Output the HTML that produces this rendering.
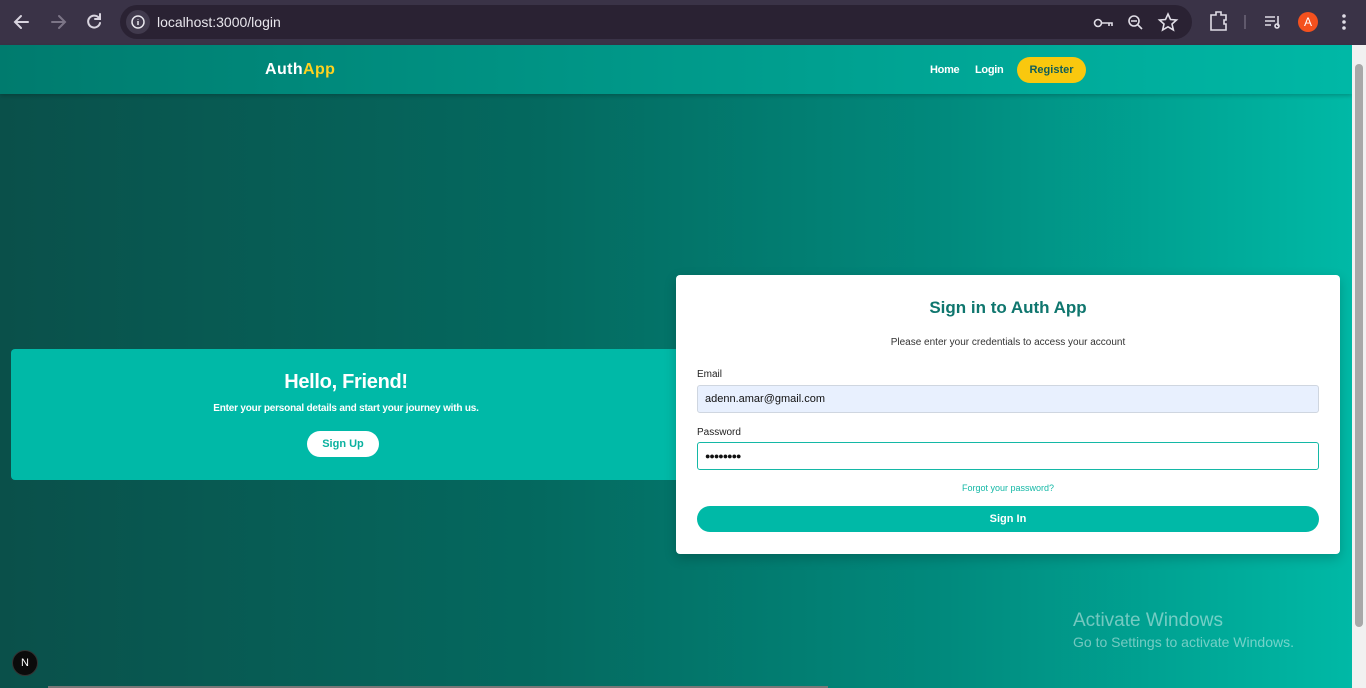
<!DOCTYPE html>
<html><head><style>
*{margin:0;padding:0;box-sizing:border-box}
body{width:1366px;height:688px;overflow:hidden;font-family:"Liberation Sans",sans-serif;background:#000;position:relative}
.chrome{position:absolute;left:0;top:0;width:1366px;height:45px;background:#3a3347}
.url{position:absolute;left:120px;top:5px;width:1072px;height:34px;border-radius:17px;background:#2a2233}
.url .txt{position:absolute;left:37px;top:9px;color:#e8e6ec;font-size:14px}
.info{position:absolute;left:6px;top:5px;width:24px;height:24px;border-radius:12px;background:#413a4d}
.page{position:absolute;left:0;top:45px;width:1352px;height:643px;background:linear-gradient(90deg,#0a504a 0%,#04695f 40%,#018a7d 70%,#00b9a6 100%)}
.head{position:absolute;left:0;top:0;width:1352px;height:49px;background:linear-gradient(90deg,#007b6e,#00b8a6);box-shadow:0 2px 4px rgba(0,0,0,.2)}
.logo{position:absolute;left:265px;top:16px;font-weight:bold;font-size:16px;color:#fff;letter-spacing:.4px}
.logo span{color:#ffd21f}
.nav{position:absolute;top:19px;font-size:11px;font-weight:bold;color:#fff;letter-spacing:-.3px}
.reg{position:absolute;left:1017px;top:12px;width:69px;height:26px;border-radius:13px;background:#f9c80e;color:#115e59;font-size:11px;font-weight:bold;text-align:center;line-height:26px}
.hello{position:absolute;left:11px;top:304px;width:670px;height:131px;border-radius:4px;background:#00b9a7;text-align:center;color:#fff}
.hello h1{font-size:20px;margin-top:22px;letter-spacing:-.3px}
.hello p{font-size:10px;font-weight:bold;margin-top:9px;letter-spacing:-.2px}
.su{display:inline-block;margin-top:17px;margin-left:-6px;width:72px;height:26px;border-radius:13px;background:#fff;color:#0ab19f;font-size:11px;font-weight:bold;line-height:26px}
.card{position:absolute;left:676px;top:230px;width:664px;height:279px;background:#fff;border-radius:4px;box-shadow:0 4px 12px rgba(0,0,0,.2)}
.card h2{text-align:center;color:#0f766e;font-size:17px;margin-top:23px}
.sub{text-align:center;font-size:10px;color:#333;margin-top:19px}
.lab{position:absolute;left:21px;font-size:10px;color:#222}
.in{position:absolute;left:21px;width:622px;height:28px;border-radius:3px;font-size:11px;padding-left:7px;line-height:26px}
.fg{position:absolute;left:0;width:664px;text-align:center;top:208px;font-size:9px;color:#14b8a6}
.btn{position:absolute;left:21px;top:231px;width:622px;height:26px;border-radius:13px;background:#00b9a7;color:#fff;font-size:11px;font-weight:bold;text-align:center;line-height:26px}
.sb{position:absolute;left:1352px;top:45px;width:14px;height:643px;background:#f1f1f1}
.sb div{position:absolute;left:3px;top:19px;width:8px;height:563px;background:#a8a8a8;border-radius:4px}
.win{position:absolute;left:1073px;top:565px;color:rgba(255,255,255,.45)}
</style></head><body>
<div class="chrome">
<svg width="120" height="45" style="position:absolute;left:0;top:0" fill="none" stroke-width="2" stroke-linecap="round">
<path d="M28 22H16M21 16l-6 6 6 6" stroke="#d8d4df"/>
<path d="M52 22h12M59 16l6 6-6 6" stroke="#7c7587"/>
<path d="M99 18a6 6 0 1 0 1 5M100 14v5h-5" stroke="#d8d4df"/>
</svg>
<div class="url"><div class="info"><svg width="24" height="24"><circle cx="12" cy="12" r="6" stroke="#e8e6ec" stroke-width="1.5" fill="none"/><path d="M12 11v4M12 9v.5" stroke="#e8e6ec" stroke-width="1.5"/></svg></div><div class="txt">localhost:3000/login</div>
<svg width="100" height="34" style="position:absolute;left:968px;top:0" fill="none" stroke="#e0dde6" stroke-width="1.6">
<circle cx="10" cy="18" r="3.5"/><path d="M14 18h10v3M21 18v3"/>
<circle cx="46" cy="16" r="5"/><path d="M50 20l4 4M43 16h6"/>
<path d="M80 9l2.5 5.5 6 .5-4.5 4 1.4 6-5.4-3.2-5.4 3.2 1.4-6-4.5-4 6-.5z"/>
</svg></div>
<svg width="160" height="45" style="position:absolute;left:1206px;top:0" fill="none" stroke="#e0dde6" stroke-width="1.6">
<path d="M5 15h5v-3h5v3h5v5h-2v4h2v6H5z"/><path d="M39 15v14" stroke="#6a6375"/>
<path d="M59 17h10M59 21h10M59 25h6M72 16v10"/><circle cx="71" cy="26" r="2"/>
<circle cx="138" cy="16" r="1" fill="#e0dde6"/><circle cx="138" cy="22" r="1" fill="#e0dde6"/><circle cx="138" cy="28" r="1" fill="#e0dde6"/>
</svg>
<div style="position:absolute;left:1298px;top:12px;width:20px;height:20px;border-radius:10px;background:#f4511e;color:#fff;font-size:12px;text-align:center;line-height:20px">A</div>
</div>
<div class="page">
<div class="head"><div class="logo">Auth<span>App</span></div>
<div class="nav" style="left:930px">Home</div><div class="nav" style="left:975px">Login</div>
<div class="reg">Register</div></div>
<div class="hello"><h1>Hello, Friend!</h1><p>Enter your personal details and start your journey with us.</p><div class="su">Sign Up</div></div>
<div class="card"><h2>Sign in to Auth App</h2><div class="sub">Please enter your credentials to access your account</div>
<div class="lab" style="top:94px">Email</div>
<div class="in" style="top:110px;background:#e8f0fe;border:1px solid #cfd6e0;color:#111">adenn.amar@gmail.com</div>
<div class="lab" style="top:152px">Password</div>
<div class="in" style="top:167px;background:#fff;border:1.5px solid #14b8a6;color:#111;font-size:9px;letter-spacing:-1px">●●●●●●●●</div>
<div class="fg">Forgot your password?</div>
<div class="btn">Sign In</div></div>
<div class="win"><div style="font-size:19px">Activate Windows</div><div style="font-size:14px;margin-top:2px">Go to Settings to activate Windows.</div></div>
<div style="position:absolute;left:12px;top:605px;width:26px;height:26px;border-radius:13px;background:#0b0b0b;border:1px solid #333;color:#fff;font-size:11px;text-align:center;line-height:24px">N</div>
<div style="position:absolute;left:48px;top:641px;width:780px;height:2px;background:#777"></div>
</div>
<div class="sb"><div></div></div>
</body></html>
